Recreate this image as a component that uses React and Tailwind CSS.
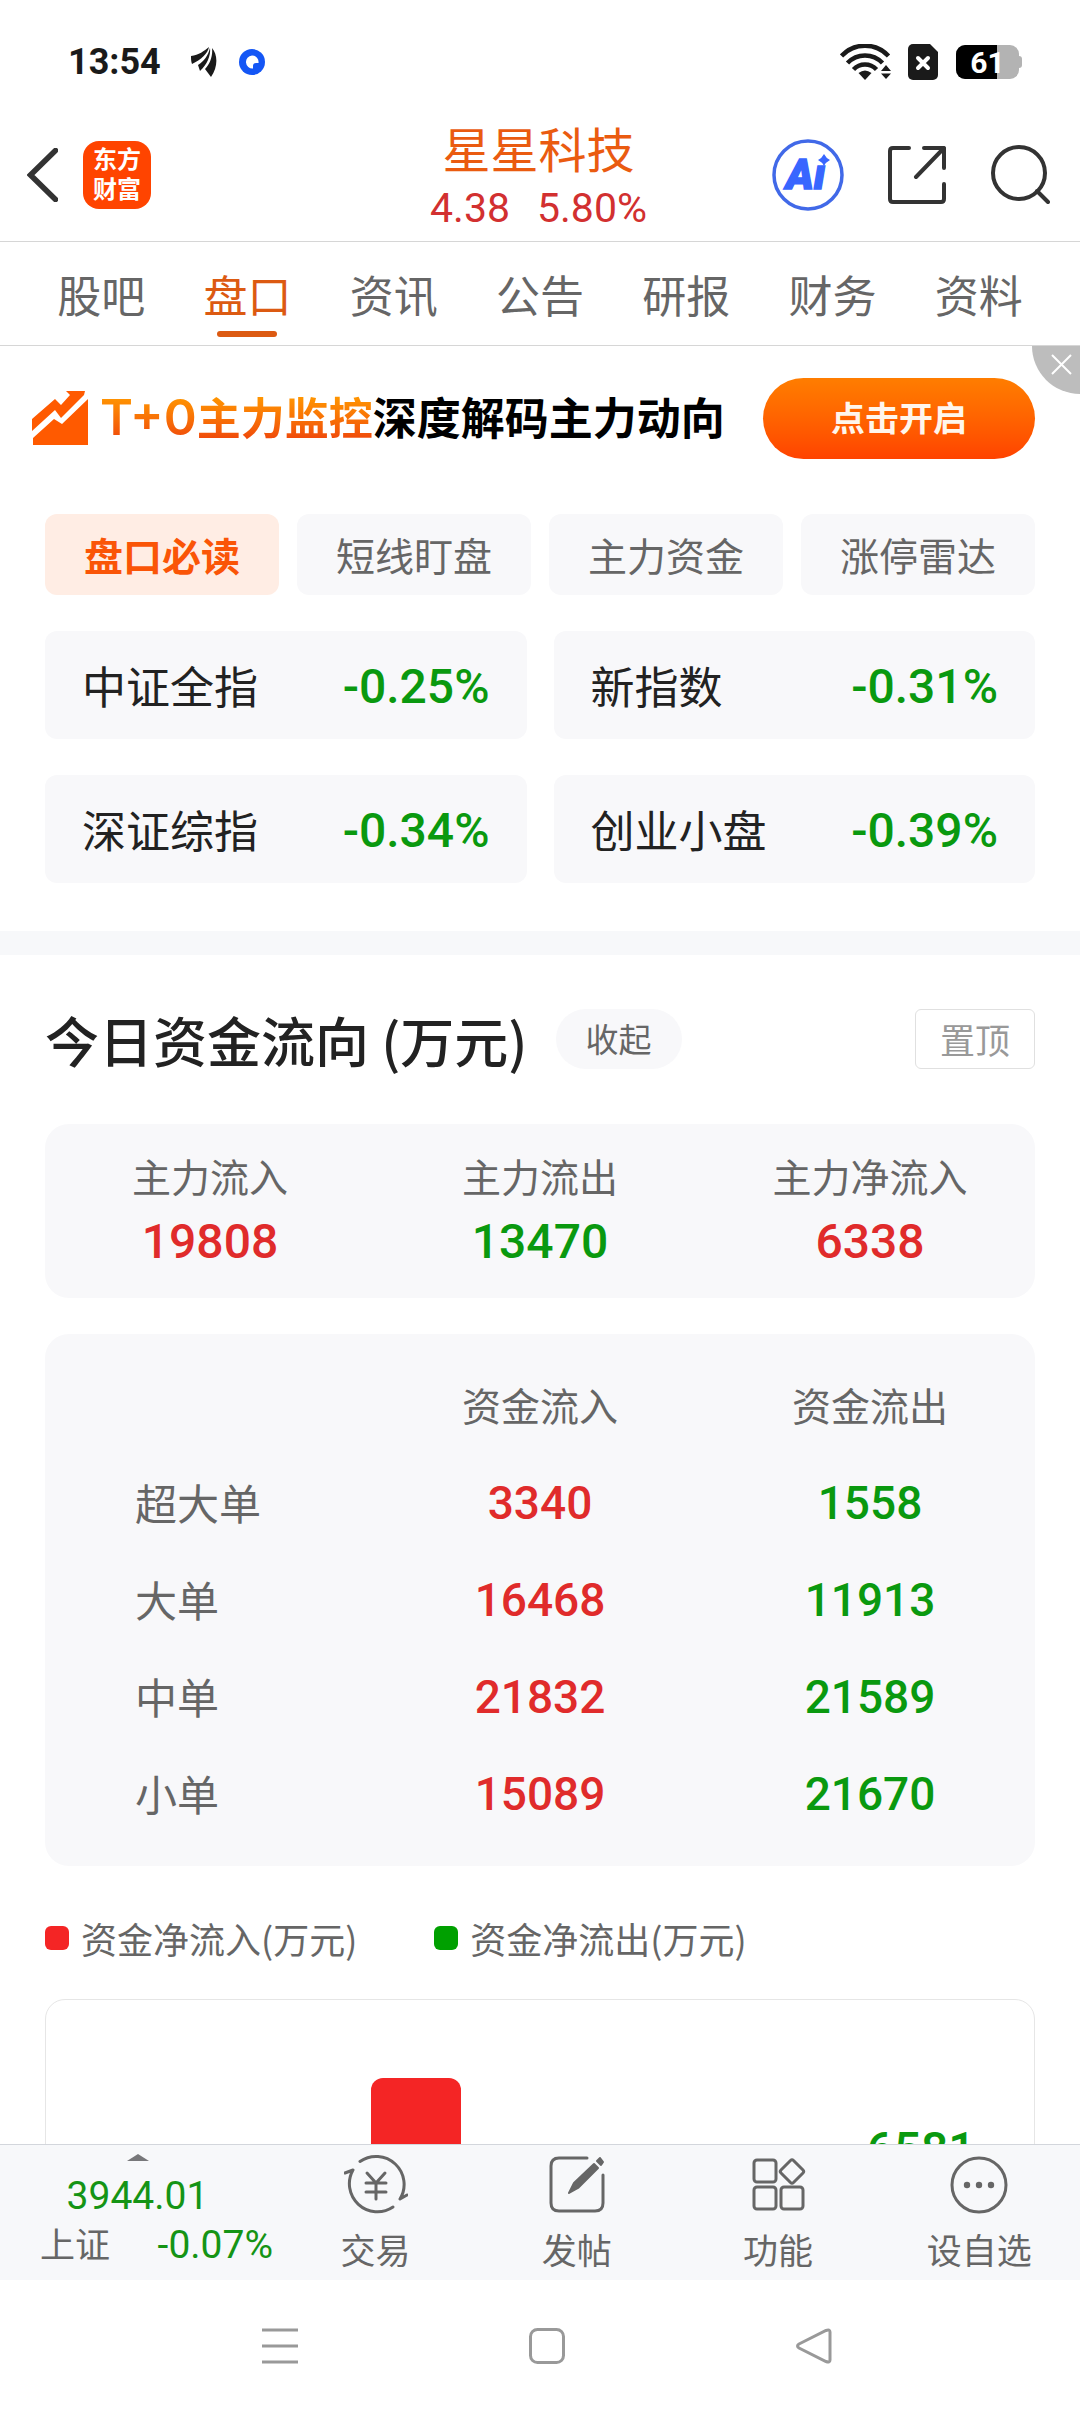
const tabs = ["股吧", "盘口", "资讯", "公告", "研报", "财务", "资料"];

const filters = ["盘口必读", "短线盯盘", "主力资金", "涨停雷达"];

const indexes = [
  { name: "中证全指", change: "-0.25%" },
  { name: "新指数", change: "-0.31%" },
  { name: "深证综指", change: "-0.34%" },
  { name: "创业小盘", change: "-0.39%" },
];

const summary = [
  { label: "主力流入", value: 19808, up: true },
  { label: "主力流出", value: 13470, up: false },
  { label: "主力净流入", value: 6338, up: true },
];

const orders = [
  { label: "超大单", inflow: 3340, outflow: 1558 },
  { label: "大单", inflow: 16468, outflow: 11913 },
  { label: "中单", inflow: 21832, outflow: 21589 },
  { label: "小单", inflow: 15089, outflow: 21670 },
];

function StatusBar() {
  return (
    <div className="flex items-center justify-between pt-10 pr-[58px] pl-[68px] text-[#1a1a1a]">
      <div className="flex h-11 items-center">
        <span className="font-[Roboto] text-[36px] font-bold">13:54</span>
        <svg className="ml-[30px] h-[30px] w-[26px]" viewBox="0 0 26 30">
          <path
            d="M0 9C8 8 13 4 18 0C17 6 10 13 1 17C0 14 0 12 0 9Z"
            fill="currentColor"
          />
          <path
            d="M19 1C20 8 16 18 9 24L7 18C13 14 17 9 19 1Z"
            fill="currentColor"
          />
          <path
            d="M21 1C27 8 27 20 20 30L14 22C19 17 22 9 21 1Z"
            fill="currentColor"
          />
        </svg>
        <svg className="ml-[22px] size-[26px]" viewBox="0 0 26 26">
          <circle cx="13" cy="13" r="13" fill="#1456f5" />
          <path
            d="M13 6.500A6.500 6.500 0 1 0 14 19.500V17A3 3 0 0 1 17 14H19.500A6.500 6.500 0 0 0 13 6.500Z"
            fill="#fff"
          />
        </svg>
      </div>

      <div className="flex items-center">
        <svg className="h-9 w-[52px]" viewBox="0 0 52 36">
          <g fill="none" stroke="currentColor" strokeWidth="4.500">
            <path d="M1.500 12A32 32 0 0 1 48.500 12" />
            <path d="M7.500 19A24 24 0 0 1 42.500 19" />
            <path d="M13.500 25.500A16 16 0 0 1 36.500 25.500" />
          </g>
          <path d="M25 36L18.500 29Q25 24 31.500 29Z" fill="currentColor" />
          <path d="M46 21L51 27H41ZM46 35L41 29.500H51Z" fill="currentColor" />
        </svg>
        <svg className="ml-4 h-9 w-[30px]" viewBox="0 0 30 36">
          <path
            d="M5 0H22L30 8V31A5 5 0 0 1 25 36H5A5 5 0 0 1 0 31V5A5 5 0 0 1 5 0Z"
            fill="currentColor"
          />
          <path
            d="M10 14L20 24M20 14L10 24"
            stroke="#fff"
            strokeWidth="4"
            strokeLinecap="round"
          />
        </svg>
        <div className="relative ml-[18px] flex h-[34px] w-[63px] items-center justify-center overflow-hidden rounded-[9px] bg-[#b3b3b3]">
          <div className="absolute inset-y-0 left-0 w-[65%] bg-black" />
          <span className="relative font-[Roboto] text-[30px] font-bold text-white">
            61
          </span>
        </div>
        <div className="h-3 w-[3px] rounded-r bg-[#b3b3b3]" />
      </div>
    </div>
  );
}

function Header() {
  return (
    <header className="grid h-[158px] grid-cols-[1fr_auto_1fr] items-center border-b border-[#d6d6d6] pt-6 pr-[30px] pl-[27px]">
      <div className="flex items-center gap-[25px]">
        <button type="button" aria-label="返回">
          <svg className="h-[54px] w-[31px]" viewBox="0 0 31 54">
            <path
              d="M28.500 2.500L3.500 27L28.500 51.500"
              fill="none"
              stroke="#333"
              strokeWidth="5.500"
              strokeLinecap="round"
            />
          </svg>
        </button>
        <div className="flex size-[68px] flex-col items-center justify-center rounded-2xl bg-[#ff4400] pb-1 text-[24px] leading-[30px] font-bold text-white">
          <span>东方</span>
          <span>财富</span>
        </div>
      </div>

      <div className="pt-2 text-center">
        <h1 className="text-[48px] leading-[52px] text-[#ea5b10]">星星科技</h1>
        <p className="mt-1.5 flex justify-center gap-[27px] font-[Roboto] text-[41px] leading-[58px] text-[#d23030]">
          <span>4.38</span>
          <span>5.80%</span>
        </p>
      </div>

      <div className="flex items-center justify-end gap-11">
        <button type="button" aria-label="AI">
          <svg className="size-[72px]" viewBox="0 0 72 72">
            <circle
              cx="36"
              cy="36"
              r="34"
              fill="none"
              stroke="#4169e8"
              strokeWidth="3.500"
            />
            <text
              x="14"
              y="50"
              className="font-[Roboto] text-[42px] font-black italic"
              fill="#3866ff"
              stroke="#3866ff"
              strokeWidth="1.500"
            >
              Aı
            </text>
            <path
              d="M52 15Q54 19 58 21Q54 23 52 27Q50 23 46 21Q50 19 52 15Z"
              fill="#3866ff"
            />
          </svg>
        </button>
        <button type="button" aria-label="分享">
          <svg
            className="size-[58px]"
            viewBox="0 0 58 58"
            fill="none"
            stroke="#333"
            strokeWidth="4"
            strokeLinecap="round"
            strokeLinejoin="round"
          >
            <path d="M21 2H5Q2 2 2 5V53Q2 56 5 56H53Q56 56 56 53V38" />
            <path d="M36 2H56V22M56 2L28 31" />
          </svg>
        </button>
        <button type="button" aria-label="搜索">
          <svg
            className="size-[60px]"
            viewBox="0 0 60 60"
            fill="none"
            stroke="#333"
            strokeWidth="4"
            strokeLinecap="round"
          >
            <circle cx="29" cy="28" r="26" />
            <path d="M47 46L58 57" />
          </svg>
        </button>
      </div>
    </header>
  );
}

function Banner() {
  return (
    <section className="relative flex h-36 items-center pr-[45px] pl-8">
      <svg className="size-14" viewBox="0 0 56 56" fill="#ff5a00">
        <path d="M0 29L23 9L29 15L38 5L34 1H53L52 5L29 28L23 20L0 41Z" />
        <path d="M1 48L22 29L30 34L56 9V55H1Z" />
      </svg>
      <p className="ml-3 pb-1 text-[44px] leading-[60px] font-bold whitespace-nowrap text-black">
        <span className="bg-linear-to-b from-[#ff9500] from-20% to-[#f04a0a] to-85% bg-clip-text text-transparent">
          <span className="font-[Inter] text-[50px] font-semibold">T+0</span>
          主力监控
        </span>
        深度解码主力动向
      </p>
      <button
        type="button"
        className="ml-auto h-[81px] w-[272px] rounded-full bg-linear-to-b from-[#ff7d00] to-[#ff4200] pb-1 text-[34px] font-bold text-[#fff6ec]"
      >
        点击开启
      </button>
      <button
        type="button"
        aria-label="关闭"
        className="absolute top-0 right-0 size-12 rounded-bl-full bg-[#bdbdbd]"
      >
        <svg className="size-12" viewBox="0 0 48 48">
          <path d="M20 9L39 28M39 9L20 28" stroke="#fff" strokeWidth="2" />
        </svg>
      </button>
    </section>
  );
}

function IndexCard({ name, change }) {
  return (
    <div className="flex h-[108px] items-center justify-between rounded-xl bg-[#f8f8fa] px-[37px]">
      <span className="text-[44px] leading-[60px]">{name}</span>
      <span className="pt-1 font-[Roboto] text-[48px] leading-[60px] font-medium text-[#0a990f]">
        {change}
      </span>
    </div>
  );
}

function MoneyFlow() {
  return (
    <section className="px-[45px] pt-[54px] text-[#666]">
      <div className="flex h-[60px] items-center">
        <h2 className="text-[54px] font-medium text-[#222]">
          今日资金流向 (万元)
        </h2>
        <button
          type="button"
          className="ml-7 h-[60px] w-[126px] rounded-full bg-[#f8f8fa] text-[33px]"
        >
          收起
        </button>
        <button
          type="button"
          className="ml-auto h-[60px] w-[120px] rounded-md border border-[#e0e0e0] text-[35px] text-[#999]"
        >
          置顶
        </button>
      </div>

      <div className="mt-[55px] grid grid-cols-3 rounded-3xl bg-[#f8f8fa] pt-6 pb-5 text-center">
        {summary.map((item) => (
          <div key={item.label}>
            <p className="pb-1 text-[39px] leading-[54px]">{item.label}</p>
            <p
              className={`font-[Roboto] text-[48px] leading-[72px] font-medium ${
                item.up ? "text-[#e02b2b]" : "text-[#0a990f]"
              }`}
            >
              {item.value}
            </p>
          </div>
        ))}
      </div>

      <div className="mt-9 rounded-3xl bg-[#f8f8fa] pt-6 pb-[23px]">
        <table className="w-full table-fixed text-center">
          <thead>
            <tr className="h-[97px] text-[39px]">
              <td />
              <th className="pb-1 font-normal">资金流入</th>
              <th className="pb-1 font-normal">资金流出</th>
            </tr>
          </thead>
          <tbody>
            {orders.map((order) => (
              <tr key={order.label} className="h-[97px]">
                <th className="pb-1 pl-[90px] text-left text-[42px] font-normal">
                  {order.label}
                </th>
                <td className="font-[Roboto] text-[46px] font-medium text-[#e02b2b]">
                  {order.inflow}
                </td>
                <td className="font-[Roboto] text-[46px] font-medium text-[#0a990f]">
                  {order.outflow}
                </td>
              </tr>
            ))}
          </tbody>
        </table>
      </div>

      <div className="mt-12 flex h-12 items-center gap-[77px] text-[36px]">
        <div className="flex items-center gap-3">
          <span className="size-6 rounded-md bg-[#f42525]" />
          资金净流入(万元)
        </div>
        <div className="flex items-center gap-3">
          <span className="size-6 rounded-md bg-[#00a000]" />
          资金净流出(万元)
        </div>
      </div>

      <div className="mt-[37px] rounded-[20px] border border-[#e6e6e6]">
        <svg className="w-full" viewBox="0 0 988 500">
          <rect x="325" y="78" width="90" height="260" rx="12" fill="#f42525" />
          <text
            x="875"
            y="166"
            textAnchor="middle"
            className="font-[Roboto] text-[48px] font-medium"
            fill="#0a990f"
          >
            6581
          </text>
        </svg>
      </div>
    </section>
  );
}

function TabItem({ label, children }) {
  return (
    <button
      type="button"
      className="flex flex-1 flex-col items-center pt-2 text-[#666]"
    >
      <svg
        className="size-16"
        viewBox="0 0 64 64"
        fill="none"
        stroke="currentColor"
        strokeWidth="3"
        strokeLinecap="round"
        strokeLinejoin="round"
      >
        {children}
      </svg>
      <span className="mt-2 text-[35px] leading-[48px]">{label}</span>
    </button>
  );
}

function BottomBar() {
  return (
    <nav className="flex h-[136px] border-t border-[#d3d6dc] bg-[#f7f8fa]">
      <button
        type="button"
        className="flex w-[275px] flex-col items-center pt-[9px] font-[Roboto] text-[#159415]"
      >
        <svg className="h-[7px] w-[22px]" viewBox="0 0 22 7">
          <path d="M11 0L22 7H0Z" fill="#77777a" />
        </svg>
        <span className="mt-3 text-[39px] leading-[46px]">3944.01</span>
        <span className="flex w-full justify-between pr-0.5 pl-10 text-[39px] leading-[52px]">
          <span className="font-['Noto_Sans_CJK_SC',sans-serif] text-[35px] leading-[48px] text-[#666]">
            上证
          </span>
          <span>-0.07%</span>
        </span>
      </button>

      <TabItem label="交易">
        <path d="M16 8.500A28 28 0 0 1 56 46L63 42" />
        <path d="M49 54A28 28 0 0 1 9 17L1 20" />
        <path d="M23 20L32 30L41 20M22 30H42M22 39H42M32 30V46" />
      </TabItem>
      <TabItem label="发帖">
        <path d="M42 5H14Q6 5 6 13V50Q6 58 14 58H50Q58 58 58 50V22" />
        <path
          d="M24 40L29 30L49 11L53 15L33 35ZM52 8L55 5L58 9L56 12Z"
          fill="currentColor"
          strokeWidth="2"
        />
      </TabItem>
      <TabItem label="功能">
        <rect x="8" y="7" width="22" height="22" rx="3" />
        <rect x="8" y="34" width="22" height="22" rx="3" />
        <rect x="35" y="34" width="22" height="22" rx="3" />
        <path d="M44.500 7.500Q46 6 47.500 7.500L57 17Q58.500 18.500 57 20L47.500 29.500Q46 31 44.500 29.500L35 20Q33.500 18.500 35 17Z" />
      </TabItem>
      <TabItem label="设自选">
        <circle cx="32" cy="32" r="27" />
        <g fill="currentColor" stroke="none">
          <circle cx="20" cy="32" r="3.200" />
          <circle cx="32" cy="32" r="3.200" />
          <circle cx="44" cy="32" r="3.200" />
        </g>
      </TabItem>
    </nav>
  );
}

function SystemNav() {
  return (
    <div className="flex h-[132px] items-center justify-between pr-[248px] pl-[262px]">
      <svg className="size-9" viewBox="0 0 36 36" stroke="#999" strokeWidth="3">
        <path d="M0 2H36M0 18H36M0 34H36" />
      </svg>
      <svg
        className="size-9"
        viewBox="0 0 36 36"
        fill="none"
        stroke="#999"
        strokeWidth="3"
      >
        <rect x="1.500" y="1.500" width="33" height="33" rx="7" />
      </svg>
      <svg
        className="size-9"
        viewBox="0 0 36 36"
        fill="none"
        stroke="#999"
        strokeWidth="3"
      >
        <path d="M3 16L30 2.500Q34 1 34 4V32Q34 35 30 33.500L3 20Q0 18 3 16Z" />
      </svg>
    </div>
  );
}

function App() {
  return (
    <div className="flex h-screen flex-col bg-white font-['Noto_Sans_CJK_SC',sans-serif] text-[#222]">
      <StatusBar />
      <Header />

      <nav className="grid h-[104px] shrink-0 grid-cols-7 border-b border-[#d6d6d6] px-7">
        {tabs.map((tab) => (
          <a
            key={tab}
            href="#"
            className={`flex flex-col items-center pt-[22px] text-[44px] leading-[60px] ${
              tab === "盘口" ? "text-[#dc5a12]" : "text-[#666]"
            }`}
          >
            {tab}
            {tab === "盘口" && (
              <span className="mt-[7px] h-1.5 w-[60px] rounded-full bg-[#dc5a12]" />
            )}
          </a>
        ))}
      </nav>

      <main className="min-h-0 flex-1 overflow-hidden">
        <Banner />

        <div className="mt-6 grid grid-cols-4 gap-[18px] px-[45px]">
          {filters.map((filter, i) => (
            <button
              key={filter}
              type="button"
              className={`h-[81px] rounded-xl text-[39px] ${
                i === 0
                  ? "bg-[#ffede4] font-bold text-[#fa5507]"
                  : "bg-[#f8f8fa] text-[#666]"
              }`}
            >
              {filter}
            </button>
          ))}
        </div>

        <div className="mt-9 grid grid-cols-2 gap-x-[27px] gap-y-9 px-[45px]">
          {indexes.map((item) => (
            <IndexCard key={item.name} name={item.name} change={item.change} />
          ))}
        </div>

        <div className="mt-12 h-6 bg-[#f7f8fa]" />

        <MoneyFlow />
      </main>

      <BottomBar />
      <SystemNav />
    </div>
  );
}

export default App;
